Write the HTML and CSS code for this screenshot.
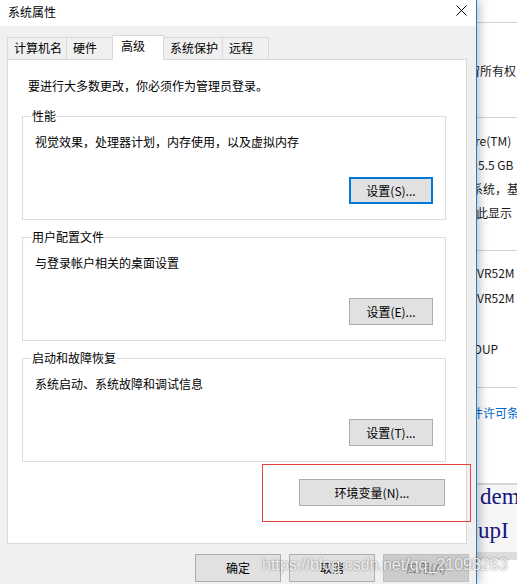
FILE: index.html
```html
<!DOCTYPE html>
<html lang="zh-CN">
<head>
<meta charset="utf-8">
<title>系统属性</title>
<link rel="stylesheet" href="styles.css">
</head>
<body>
<div class="screen">
  <div class="dialog">
    <div class="titlebar">
      <span class="title">系统属性</span>
      <svg class="close" width="11" height="11" viewBox="0 0 11 11"><path d="M0.5 0.5L10.5 10.5M10.5 0.5L0.5 10.5" stroke="#000" stroke-width="1" fill="none"/></svg>
    </div>
    <div class="dialog-body">
      <div class="tabs">
        <div class="tab">计算机名</div>
        <div class="tab">硬件</div>
        <div class="tab tab-active">高级</div>
        <div class="tab">系统保护</div>
        <div class="tab">远程</div>
      </div>
      <div class="panel">
        <p class="intro">要进行大多数更改，你必须作为管理员登录。</p>
        <fieldset class="group group-first">
          <legend>性能</legend>
          <p class="desc">视觉效果，处理器计划，内存使用，以及虚拟内存</p>
          <div class="group-actions"><button class="btn btn-focus">设置(S)...</button></div>
        </fieldset>
        <fieldset class="group">
          <legend>用户配置文件</legend>
          <p class="desc">与登录帐户相关的桌面设置</p>
          <div class="group-actions"><button class="btn">设置(E)...</button></div>
        </fieldset>
        <fieldset class="group">
          <legend>启动和故障恢复</legend>
          <p class="desc">系统启动、系统故障和调试信息</p>
          <div class="group-actions"><button class="btn">设置(T)...</button></div>
        </fieldset>
        <div class="env-row"><button class="btn btn-env">环境变量(N)...</button></div>
      </div>
      <div class="footer">
        <button class="btn btn-footer">确定</button>
        <button class="btn btn-footer">取消</button>
        <button class="btn btn-footer btn-disabled">应用(A)</button>
      </div>
    </div>
  </div>
  <div class="bgwin">
    <div class="bg-rule bg-rule-1"></div>
    <div class="bg-line bg-l1">留所有权</div>
    <div class="bg-rule bg-rule-2"></div>
    <div class="bg-line bg-l2">re(TM)</div>
    <div class="bg-line bg-l3">5.5 GB</div>
    <div class="bg-line bg-l4">系统，基</div>
    <div class="bg-line bg-l5">此显示</div>
    <div class="bg-rule bg-rule-3"></div>
    <div class="bg-line bg-l6">VR52M</div>
    <div class="bg-line bg-l7">VR52M</div>
    <div class="bg-line bg-l8">OUP</div>
    <div class="bg-rule bg-rule-4"></div>
    <div class="bg-line bg-link">件许可条</div>
    <div class="code">
      <div class="code-line code-l1">dem</div>
      <div class="code-line code-l2">upI</div>
    </div>
    <div class="code-bar"></div>
  </div>
  <div class="annotation"></div>
  <div class="watermark">https://blog.csdn.net/qq_21098263</div>
</div>
</body>
</html>
```

FILE: styles.css
```css
* { box-sizing: border-box; }
html, body { margin: 0; padding: 0; background: #fff; }
body {
  font-family: "Noto Sans CJK SC", "Noto Sans", sans-serif;
  font-size: 12px;
  color: #000;
}
.screen {
  position: relative;
  width: 517px;
  height: 584px;
  overflow: hidden;
  display: flex;
}
.dialog {
  position: relative;
  z-index: 2;
  width: 477px;
  flex: none;
  height: 584px;
  background: #f0f0f0;
  border-right: 1px solid #1c7fd6;
  box-shadow: 2px 0 10px rgba(0, 0, 0, 0.28);
  display: flex;
  flex-direction: column;
}
.titlebar {
  height: 26px;
  background: #fff;
  display: flex;
  justify-content: space-between;
  align-items: flex-start;
  padding: 0 9px 0 8px;
  flex: none;
}
.title { line-height: 16px; margin-top: 4px; }
.close { margin-top: 5px; display: block; }
.dialog-body {
  padding: 9px 0 0 7px;
  display: flex;
  flex-direction: column;
}
.tabs {
  display: flex;
  height: 24px;
  align-items: flex-start;
}
.tab {
  margin-top: 2px;
  height: 22px;
  line-height: 20px;
  min-width: 47px;
  padding: 0 4px 0 6px;
  border: 1px solid #d9d9d9;
  border-bottom: none;
  background: #f0f0f0;
  white-space: nowrap;
}
.tab + .tab { margin-left: -1px; }
.tab-active {
  position: relative;
  z-index: 1;
  margin-top: 0;
  height: 25px;
  line-height: 20px;
  min-width: 52px;
  padding-left: 8px;
  background: #fff;
}
.panel {
  width: 460px;
  height: 485px;
  background: #fff;
  border: 1px solid #d9d9d9;
  padding-top: 18px;
  display: flex;
  flex-direction: column;
}
.intro {
  margin: 0 0 0 20px;
  line-height: 16px;
}
.group {
  margin: 9px 20px 0 14px;
  padding: 10px 12px 15px 12px;
  border: 1px solid #dcdcdc;
  min-width: 0;
}
.group-first { margin-top: 14px; }
.group legend {
  padding: 0 1px;
  margin-left: -4px;
  line-height: 16px;
}
.desc {
  margin: 0;
  line-height: 16px;
}
.group-actions {
  display: flex;
  justify-content: flex-end;
  margin-top: 27px;
}
.btn {
  font: inherit;
  color: #000;
  width: 84px;
  height: 27px;
  padding: 0;
  margin: 0;
  background: #e1e1e1;
  border: 1px solid #adadad;
  line-height: 16px;
  text-align: center;
}
.btn-focus { border: 2px solid #0078d7; }
.env-row {
  display: flex;
  justify-content: flex-end;
  padding-right: 21px;
  margin-top: 17px;
}
.btn-env { width: 146px; }
.footer {
  display: flex;
  justify-content: flex-end;
  gap: 8px;
  margin-top: 10px;
  padding-right: 7px;
}
.btn-footer { width: 86px; height: 28px; }
.btn-disabled {
  background: #cccccc;
  border-color: #bfbfbf;
  color: #838383;
}

/* background window */
.bgwin {
  flex: 1;
  min-width: 0;
  background: #fff;
  overflow: hidden;
  display: flex;
  flex-direction: column;
  white-space: nowrap;
}
.bg-rule { height: 1px; background: #d2d2d2; flex: none; }
.bg-rule-1 { margin-top: 22px; }
.bg-rule-2 { margin-top: 34px; }
.bg-rule-3 { margin-top: 25px; }
.bg-rule-4 { margin-top: 26px; }
.bg-line { line-height: 24px; height: 24px; flex: none; color: #1a1a1a; }
.bg-l1 { margin-top: 36px; margin-left: -9px; }
.bg-l2 { margin-top: 11px; margin-left: -2px; }
.bg-l3 { margin-left: 1px; }
.bg-l4 { margin-left: -6px; }
.bg-l5 { margin-left: -1px; }
.bg-l6 { margin-top: 10px; }
.bg-l7 { margin-top: 1px; }
.bg-l8 { margin-top: 27px; margin-left: -4px; }
.bg-link { margin-top: 13px; margin-left: -6px; color: #0066cc; }
.code {
  margin-top: 58px;
  border-top: 2px solid #d6d6d6;
  background: #f6f6f6;
  height: 69px;
  padding-top: 0;
  font-family: "Liberation Serif", serif;
  font-size: 23px;
  color: #16167e;
  display: flex;
  flex-direction: column;
  gap: 10px;
  flex: none;
}
.code-line { line-height: 24px; height: 24px; }
.code-l1 { margin-left: 3px; }
.code-l2 { margin-left: 1px; }
.code-bar { height: 8px; background: #dcdcdc; flex: none; }

/* overlays */
.annotation {
  position: absolute;
  z-index: 3;
  left: 262px;
  top: 464px;
  width: 209px;
  height: 58px;
  border: 1px solid #e8423f;
}
.watermark {
  position: absolute;
  z-index: 4;
  left: 262px;
  top: 557px;
  font-family: "Liberation Sans", Arial, sans-serif;
  font-size: 16px;
  line-height: 16px;
  color: rgba(255, 255, 255, 0.88);
  text-shadow: 0 0 2px rgba(0, 0, 0, 0.55);
  white-space: nowrap;
}
```
